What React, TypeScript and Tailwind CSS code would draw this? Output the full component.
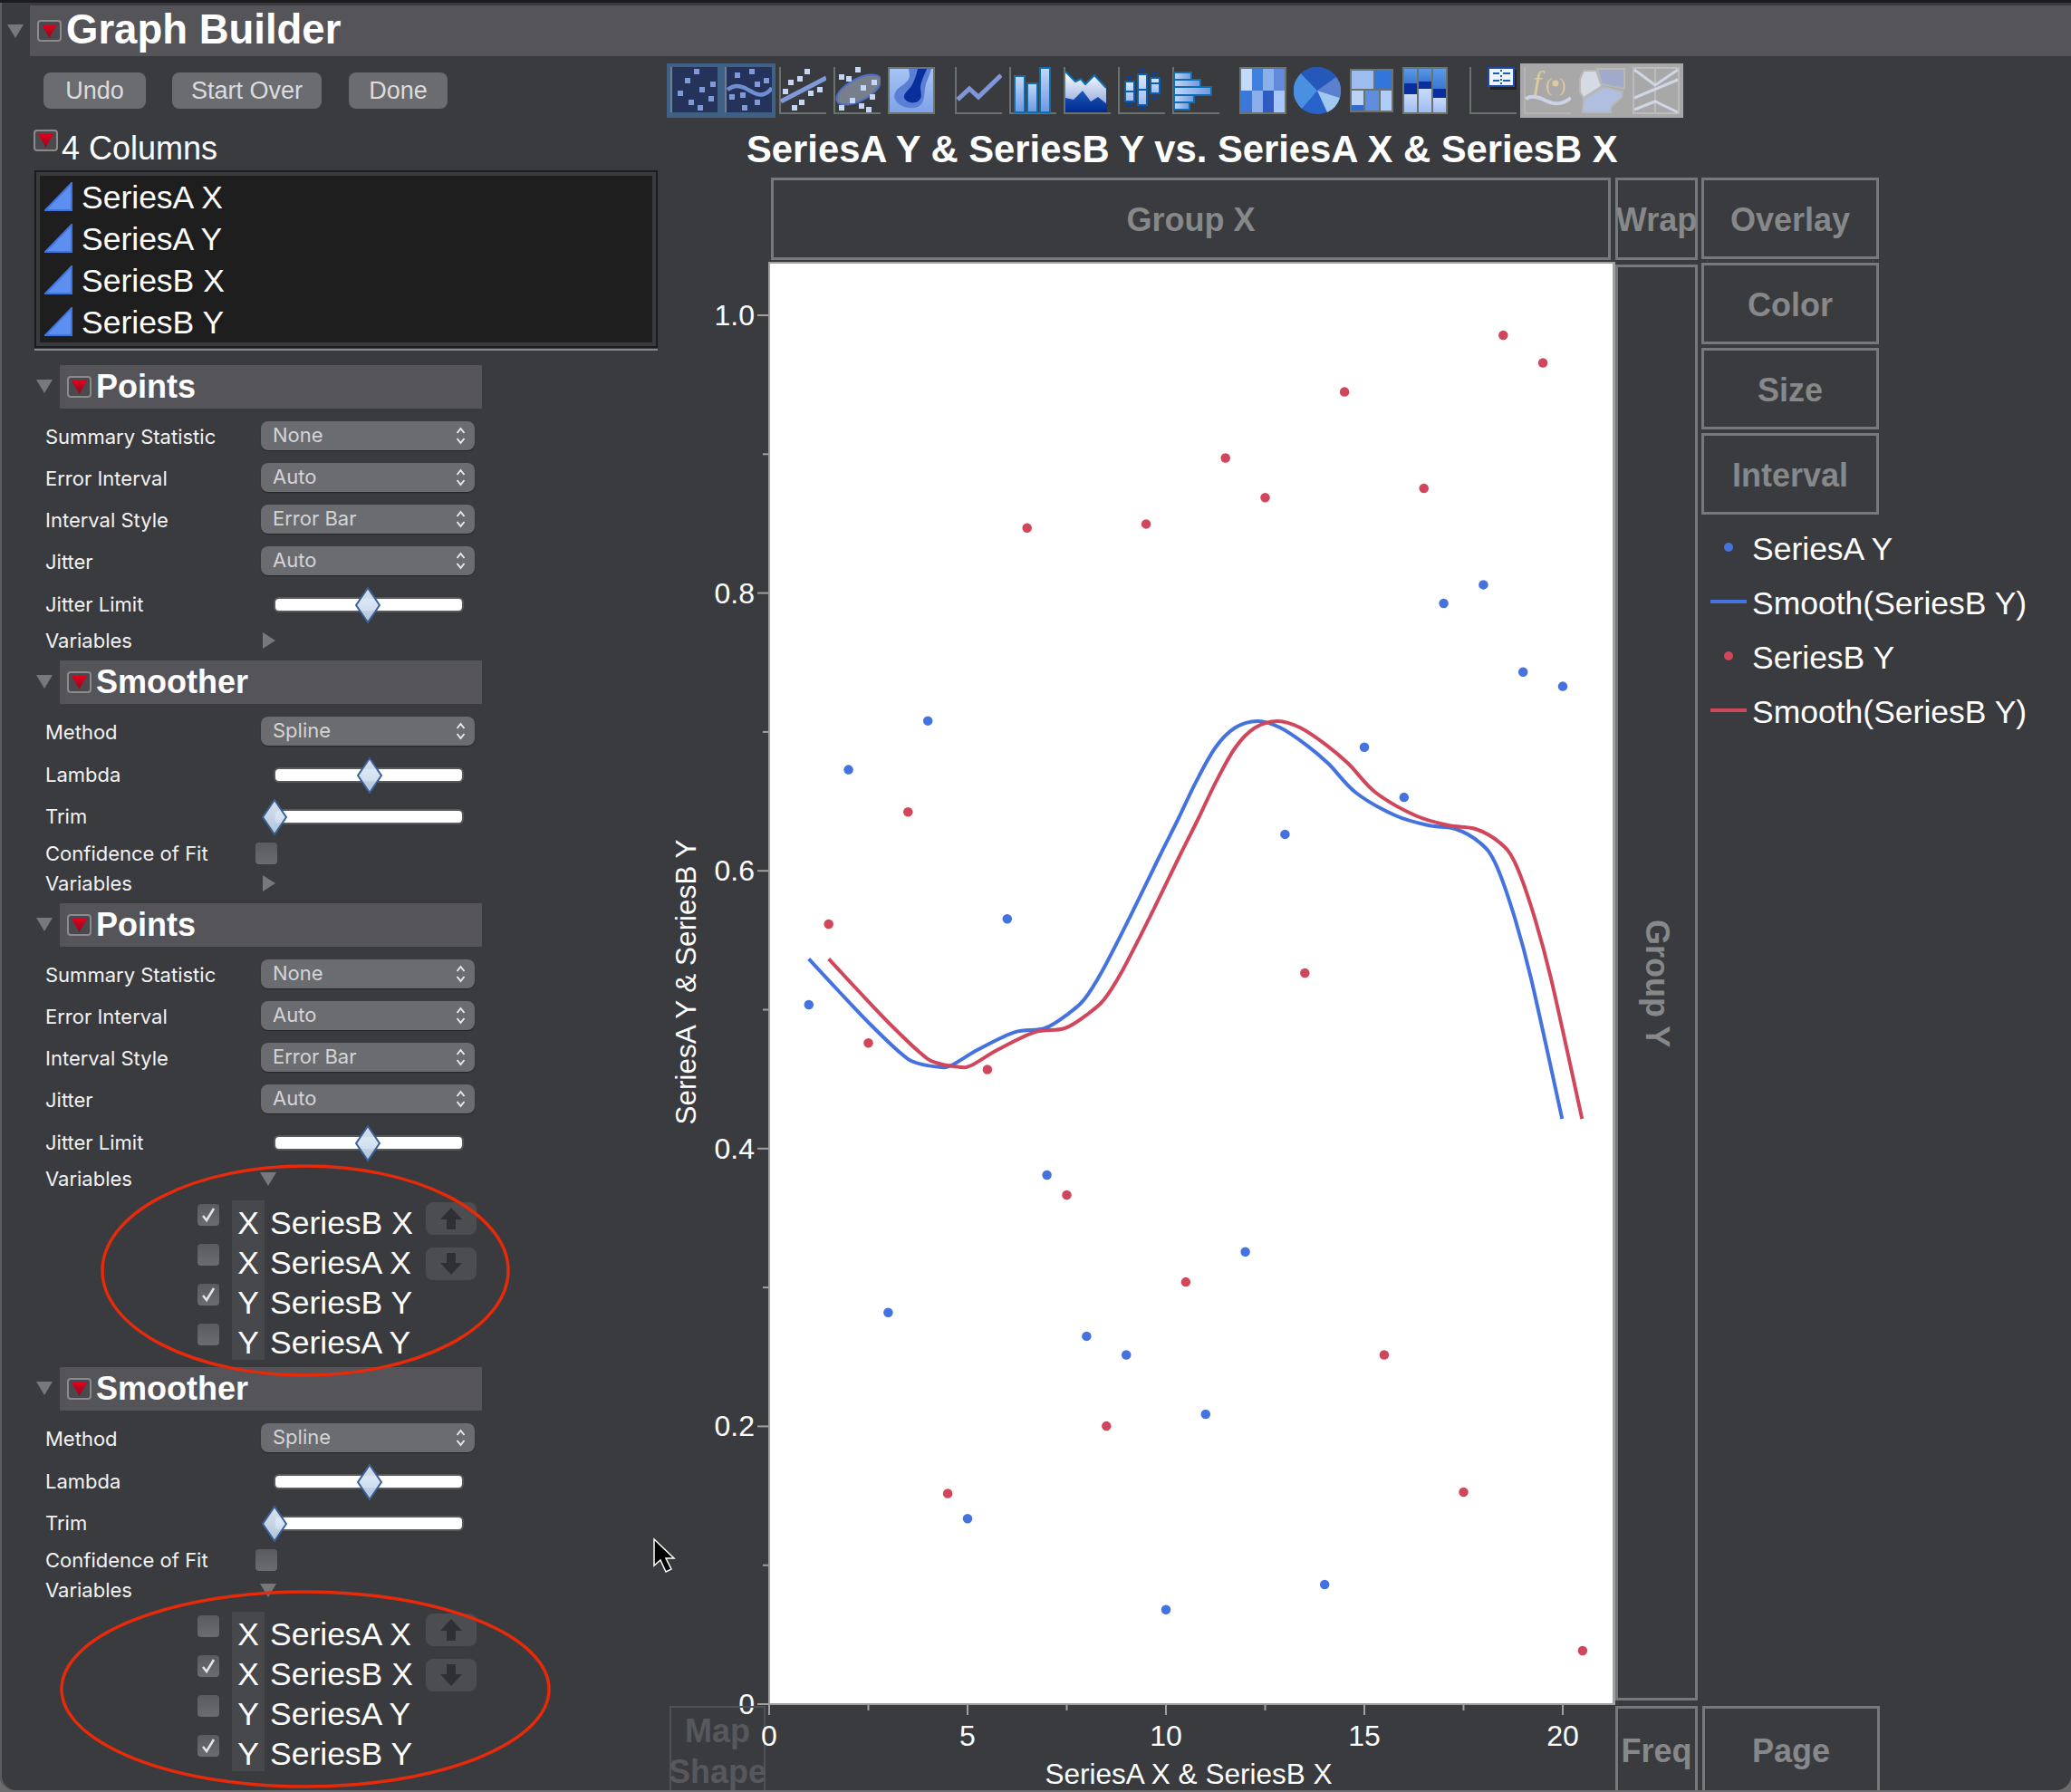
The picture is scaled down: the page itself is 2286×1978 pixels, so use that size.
import { ReactNode } from 'react';

// ---------- chart data ----------
const blueY = [0.5036, 0.6728, 0.282, 0.708, 0.1336, 0.5654, 0.3809, 0.2649, 0.2515, 0.068, 0.2087, 0.3257, 0.6263, 0.0861, 0.689, 0.6529, 0.7926, 0.806, 0.7432, 0.7328];
const redY = [0.5616, 0.476, 0.6424, 0.1517, 0.457, 0.8469, 0.3666, 0.2002, 0.8497, 0.3039, 0.8973, 0.8687, 0.5264, 0.9449, 0.2515, 0.8754, 0.1526, 0.9857, 0.9658, 0.0385];

// smoother, traced in page pixels
const curve: [number, number][] = [
  [892.7, 1058.3], [926.7, 1095], [960, 1130], [993.3, 1161.7], [1010, 1172.7], [1036.7, 1177.7], [1050, 1176],
  [1080, 1158.3], [1120, 1139.3], [1153.3, 1135], [1180, 1118.3], [1196.7, 1103.3], [1216.7, 1071.7], [1246.7, 1013.3],
  [1280, 945], [1300, 905], [1320, 863.3], [1341.7, 825], [1363.3, 803.3], [1388.3, 796], [1413.3, 803.3], [1443.3, 823.3],
  [1466.7, 843.3], [1496.7, 875], [1540, 900], [1576.7, 911], [1606.7, 915], [1633.3, 930], [1650, 951.7], [1670, 1006.7],
  [1690, 1080], [1724.3, 1235],
];

const BLUE = '#4472df';
const RED = '#d0465a';

function smoothPath(points: [number, number][]) {
  let d = `M${points[0][0]} ${points[0][1]}`;
  for (let i = 0; i < points.length - 1; i++) {
    const p0 = points[i - 1] || points[i];
    const p1 = points[i];
    const p2 = points[i + 1];
    const p3 = points[i + 2] || p2;
    const c1x = p1[0] + (p2[0] - p0[0]) / 6;
    const c1y = p1[1] + (p2[1] - p0[1]) / 6;
    const c2x = p2[0] - (p3[0] - p1[0]) / 6;
    const c2y = p2[1] - (p3[1] - p1[1]) / 6;
    d += ` C${c1x} ${c1y} ${c2x} ${c2y} ${p2[0]} ${p2[1]}`;
  }
  return d;
}

const px = (v: number) => -1 + 43.8 * v;
const py = (v: number) => 1590 - 1533 * v;

function PlotArea() {
  const local = curve.map(([x, y]) => [x - 850, y - 291] as [number, number]);
  const path = smoothPath(local);
  return (
    <svg width="931" height="1589" className="block">
      {blueY.map((v, i) => <circle key={i} cx={px(i + 1)} cy={py(v)} r="5.25" fill={BLUE} />)}
      {redY.map((v, i) => <circle key={i} cx={px(i + 1.5)} cy={py(v)} r="5.25" fill={RED} />)}
      <path d={path} fill="none" stroke={BLUE} strokeWidth="4" />
      <path d={path} transform="translate(22 0)" fill="none" stroke={RED} strokeWidth="4" />
    </svg>
  );
}

function YAxis() {
  const ticks = [0, 0.1, 0.2, 0.3, 0.4, 0.5, 0.6, 0.7, 0.8, 0.9, 1];
  const y = (v: number) => 1592 - 1533 * v;
  return (
    <svg width="112" height="1593" className="block overflow-visible" fontFamily="Liberation Sans, sans-serif">
      {ticks.map((v, i) => (
        <line key={v} x1={i % 2 === 0 ? 100 : 106} x2="112" y1={y(v)} y2={y(v)} stroke="#a0a0a0" strokeWidth="2" />
      ))}
      {[0, 0.2, 0.4, 0.6, 0.8, 1].map((v) => (
        <text key={v} x="97" y={y(v) + 11} textAnchor="end" fontSize="32" fill="#fff">
          {v === 0 ? '0' : v.toFixed(1)}
        </text>
      ))}
      <text transform="translate(32 795) rotate(-90)" textAnchor="middle" fontSize="31.5" fill="#fff">
        SeriesA Y &amp; SeriesB Y
      </text>
    </svg>
  );
}

function XAxis() {
  const ticks = [0, 2.5, 5, 7.5, 10, 12.5, 15, 17.5, 20];
  const x = (v: number) => 1 + 43.8 * v;
  return (
    <svg width="935" height="93" className="block overflow-visible" fontFamily="Liberation Sans, sans-serif">
      {ticks.map((v, i) => (
        <line key={v} x1={x(v)} x2={x(v)} y1="0" y2={i % 2 === 0 ? 11 : 6} stroke="#a0a0a0" strokeWidth="2" />
      ))}
      {[0, 5, 10, 15, 20].map((v) => (
        <text key={v} x={x(v)} y="45" textAnchor="middle" fontSize="32" fill="#fff">{v}</text>
      ))}
      <text x="464" y="87" textAnchor="middle" fontSize="31.5" fill="#fff">SeriesA X &amp; SeriesB X</text>
    </svg>
  );
}

// ---------- toolbar icons ----------
function Icon({ children }: { children: ReactNode }) {
  return (
    <svg width="52" height="52" viewBox="0 0 52 52" className="block shrink-0">
      {children}
    </svg>
  );
}

const Axes = ({ color = '#6b736f' }: { color?: string }) => (
  <path d="M1 0V51H52" fill="none" stroke={color} strokeWidth="2" />
);

function Squares({ pts, fill }: { pts: number[][]; fill: string }) {
  return (
    <>
      {pts.map(([x, y]) => <rect key={`${x}-${y}`} x={x - 3} y={y - 3} width="6" height="6" fill={fill} />)}
    </>
  );
}

function Grad({ id, from, to, horizontal }: { id: string; from: string; to: string; horizontal?: boolean }) {
  return (
    <defs>
      <linearGradient id={id} x1="0" y1="0" x2={horizontal ? '1' : '0'} y2={horizontal ? '0' : '1'}>
        <stop offset="0" stopColor={from} />
        <stop offset="1" stopColor={to} />
      </linearGradient>
    </defs>
  );
}

const ScatterIcon = () => (
  <Icon>
    <rect x="2" y="0" width="50" height="50" fill="#25335a" />
    <path d="M1 0V50" stroke="#6b7f95" strokeWidth="2" />
    <Squares fill="#7f9ad8" pts={[[29, 5], [19, 15], [47, 19], [35, 25], [11, 29], [45, 35], [23, 39], [33, 45]]} />
  </Icon>
);

const WaveIcon = () => (
  <Icon>
    <rect x="2" y="0" width="50" height="50" fill="#25335a" />
    <path d="M1 0V50" stroke="#6b7f95" strokeWidth="2" />
    <path d="M3 25C10 20 15 20 22 23C30 27 36 32 43 30C47 29 50 26 52 23" fill="none" stroke="#6f8fd0" strokeWidth="4.5" />
    <Squares fill="#7f9ad8" pts={[[14, 9], [30, 5], [46, 15], [36, 19], [20, 31], [8, 33], [36, 39], [22, 45]]} />
  </Icon>
);

const LineFitIcon = () => (
  <Icon>
    <Axes />
    <path d="M2 38L52 12" stroke="#7f9ad8" strokeWidth="5" />
    <Squares fill="#c5d6f6" pts={[[31, 5], [23, 13], [13, 17], [7, 27], [35, 29], [45, 25], [25, 39], [17, 45]]} />
  </Icon>
);

const EllipseIcon = () => (
  <Icon>
    <Axes />
    <ellipse cx="28" cy="25" rx="27" ry="12" transform="rotate(-28 28 25)" fill="#777f8c" stroke="#4a6fc8" strokeWidth="2" />
    <Squares fill="#c5d6f6" pts={[[27, 3], [9, 11], [17, 13], [45, 17], [33, 23], [43, 33], [21, 37], [31, 43], [39, 47], [9, 45]]} />
  </Icon>
);

const ContourIcon = () => (
  <Icon>
    <Grad id="contour" from="#a8c4f4" to="#7ea2ea" />
    <rect x="1" y="1" width="50" height="50" fill="url(#contour)" stroke="#6b736f" strokeWidth="2" />
    <path d="M23 2H48C46 10 42 16 41 24C40 32 40 38 36 42C30 47 18 46 11 40C6 35 6 29 11 24C17 19 24 16 24 9Z" fill="#5c7fd6" />
    <path d="M33 2H43C40 10 36 16 36 24C37 30 38 35 33 38C28 41 20 39 18 34C17 30 22 26 26 21C29 16 31 10 33 2Z" fill="#0a2f9c" />
  </Icon>
);

const LineIcon = () => (
  <Icon>
    <Axes />
    <path d="M3 36L16 24L26 33L51 9" fill="none" stroke="#7f96d8" strokeWidth="5" />
  </Icon>
);

const BarIcon = () => (
  <Icon>
    <Grad id="bars" from="#c6d8f6" to="#6f97e0" />
    <Axes />
    {[[6, 10], [20, 18], [34, 1]].map(([x, y]) => (
      <rect key={x} x={x} y={y} width="11" height={50 - y} fill="url(#bars)" stroke="#0a6db5" strokeWidth="2" />
    ))}
  </Icon>
);

const AreaIcon = () => (
  <Icon>
    <Grad id="areaBack" from="#ffffff" to="#7f9ad8" />
    <Grad id="areaFront" from="#1e59b8" to="#002a90" />
    <Axes />
    <path d="M2 5L13 16L19 13L24 19L34 9L47 23V50H2Z" fill="url(#areaBack)" />
    <path d="M2 5L13 16L19 13L24 19L34 9L47 23" fill="none" stroke="#0a6db5" strokeWidth="2" />
    <path d="M2 34L11 36L21 26L30 38L38 33L48 41V50H2Z" fill="url(#areaFront)" />
  </Icon>
);

const BoxIcon = () => (
  <Icon>
    <Grad id="boxes" from="#dbe7fa" to="#9dbaf0" />
    <Axes />
    {[[13, 10, 43, 16, 38, 27], [27, 2, 47, 8, 42, 25], [41, 6, 35, 12, 29, 18]].map(([x, t, b, y1, y2, m]) => (
      <g key={x}>
        <path d={`M${x} ${t}V${b}M${x - 3} ${t}H${x + 3}M${x - 3} ${b}H${x + 3}`} stroke="#0a3f9c" strokeWidth="2" fill="none" />
        <rect x={x - 5} y={y1} width="10" height={y2 - y1} fill="url(#boxes)" stroke="#0a5fb5" strokeWidth="2" />
        <path d={`M${x - 5} ${m}H${x + 5}`} stroke="#0a5fb5" strokeWidth="2" />
      </g>
    ))}
  </Icon>
);

const HBarIcon = () => (
  <Icon>
    <Grad id="hbars" from="#c6d8f6" to="#6f97e0" horizontal />
    <Axes />
    {[[6, 21], [14, 31], [22, 43], [31, 24], [39, 19]].map(([y, r]) => (
      <rect key={y} x="2" y={y} width={r - 2} height={y === 22 ? 9 : 8} fill="url(#hbars)" stroke="#0a6db5" strokeWidth="2" />
    ))}
  </Icon>
);

const HeatIcon = () => (
  <Icon>
    <rect x="0" y="0" width="52" height="52" fill="#6b736f" />
    {[
      ['#c5d9fb', '#3f7fe0', '#8cb0ec', '#6289dc'],
      ['#3c78dc', '#8aaeec', '#2f5cc0', '#a8c6fb'],
    ].map((row, r) =>
      row.map((c, i) => <rect key={`${r}-${i}`} x={2 + i * 12} y={2 + r * 24} width="12" height="24" fill={c} />),
    )}
  </Icon>
);

const PieIcon = () => (
  <Icon>
    <circle cx="26" cy="26" r="26" fill="#2a62cc" />
    <path d="M26 26L8 7A26 26 0 0 0 9 46Z" fill="#4a90e0" />
    <path d="M26 26L8 7A26 26 0 0 1 47 11Z" fill="#2558b8" />
    <path d="M26 26L47 11A26 26 0 0 1 51 34Z" fill="#5c80d0" />
    <path d="M26 26L51 34A26 26 0 0 1 37 50Z" fill="#a0c8f0" />
  </Icon>
);

const TreemapIcon = () => (
  <Icon>
    <rect x="2" y="2" width="48" height="48" fill="#6b736f" />
    <rect x="4" y="4" width="24" height="20" fill="#9dbcf0" />
    <rect x="30" y="4" width="18" height="20" fill="#3276dc" />
    <rect x="4" y="26" width="13" height="22" fill="#bcd3f8" />
    <rect x="4" y="42" width="13" height="6" fill="#2f6bd0" />
    <rect x="19" y="26" width="15" height="22" fill="#5f8fdc" />
    <rect x="36" y="26" width="12" height="22" fill="#b0ccf8" />
  </Icon>
);

const MosaicIcon = () => (
  <Icon>
    <Grad id="mosaicTop" from="#5b9ae8" to="#3b78d0" />
    <Grad id="mosaicLow" from="#c8daf9" to="#9fbdf2" />
    <rect x="0" y="0" width="50" height="52" fill="#6b736f" />
    {[[2, 18, 30], [18, 16, 24], [34, 24, 34]].map(([x, a, b]) => (
      <g key={x}>
        <rect x={x} y="2" width="14" height={a - 2} fill="url(#mosaicTop)" />
        <rect x={x} y={a} width="14" height={b - a} fill="#0a2f9c" />
        <rect x={x} y={b} width="14" height={50 - b} fill="url(#mosaicLow)" />
      </g>
    ))}
  </Icon>
);

const CaptionIcon = () => (
  <Icon>
    <path d="M1 0V51H52" fill="none" stroke="#6b736f" strokeWidth="2" />
    <rect x="23" y="3" width="29" height="22" fill="#202226" />
    <rect x="20" y="0" width="30" height="22" fill="#1f4aa8" />
    <rect x="22" y="2" width="26" height="18" fill="#eef3fb" />
    <path d="M26 7H33M37 7H45M26 15H33M37 15H45" stroke="#1a5fb0" strokeWidth="2" />
    <path d="M35 3V5M35 9V11M35 13V15M35 17V19" stroke="#1a5fb0" strokeWidth="2" />
  </Icon>
);

const FormulaIcon = () => (
  <Icon>
    <path d="M1 0V51H52" fill="none" stroke="#b5b5b5" strokeWidth="2" />
    <text x="10" y="28" fontFamily="Liberation Serif, serif" fontStyle="italic" fontSize="34" fill="#dccb9f">f</text>
    <text x="24" y="27" fontFamily="Liberation Serif, serif" fontSize="22" fill="#dccb9f">(</text>
    <circle cx="35" cy="18" r="3.5" fill="#dccb9f" />
    <text x="39" y="27" fontFamily="Liberation Serif, serif" fontSize="22" fill="#dccb9f">)</text>
    <path d="M2 35C10 31 16 33 24 37C34 42 44 41 52 34" fill="none" stroke="#cbd3e4" strokeWidth="4" />
  </Icon>
);

const MapIcon = () => (
  <Icon>
    <path d="M21 2H51V24L26 19Z" fill="#a0aacb" stroke="#b8b8b8" strokeWidth="2" />
    <path d="M2 13L6 4H20L26 21L6 34L2 28Z" fill="#d4dbe5" stroke="#b8b8b8" strokeWidth="2" />
    <path d="M28 22L49 27L48 33L36 44V50H5L6 36Z" fill="#b0bfe0" stroke="#b8b8b8" strokeWidth="2" />
  </Icon>
);

const ParallelIcon = () => (
  <Icon>
    <path d="M1 0V51H52M25 0V51M1 1H52M51 1V51" fill="none" stroke="#bcbcbc" strokeWidth="2" />
    <path d="M2 3L25 20L50 3M2 34L50 14M2 47L25 38L50 50" fill="none" stroke="#cfd6e6" strokeWidth="3" />
  </Icon>
);

function Toolbar() {
  return (
    <div className="flex h-[60px] mt-[8px] items-center">
      <div className="flex h-full w-[120px] items-center gap-[8px] pl-[4px] bg-[#3f6186]">
        <ScatterIcon />
        <WaveIcon />
      </div>
      <div className="flex items-center gap-[8px] ml-[4px]">
        <LineFitIcon />
        <EllipseIcon />
        <ContourIcon />
      </div>
      <div className="flex items-center gap-[8px] ml-[22px]">
        <LineIcon />
        <BarIcon />
        <AreaIcon />
        <BoxIcon />
        <HBarIcon />
      </div>
      <div className="flex items-center gap-[8px] ml-[22px]">
        <HeatIcon />
        <PieIcon />
        <TreemapIcon />
        <MosaicIcon />
      </div>
      <div className="ml-[22px]">
        <CaptionIcon />
      </div>
      <div className="flex h-full w-[180px] items-center gap-[8px] ml-[4px] pl-[4px] bg-[#a8a8a8]">
        <FormulaIcon />
        <MapIcon />
        <ParallelIcon />
      </div>
    </div>
  );
}

// ---------- small controls ----------
function MenuButton() {
  return (
    <div className="flex h-[24px] w-[27px] shrink-0 items-center justify-center rounded-[4px] border-2 border-[#8b8b8d] bg-[#4a4a4e]">
      <svg width="19" height="15" viewBox="0 0 19 15">
        <Grad id="menuRed" from="#e0001f" to="#8f0a1c" />
        <path d="M1 0H18L9.5 15Z" fill="url(#menuRed)" />
      </svg>
    </div>
  );
}

function DiscloseDown() {
  return (
    <svg width="18" height="15" viewBox="0 0 18 15" className="block shrink-0">
      <path d="M0 0H18L9 15Z" fill="#77787a" />
    </svg>
  );
}

function DiscloseRight() {
  return (
    <svg width="14" height="18" viewBox="0 0 14 18" className="block shrink-0">
      <path d="M0 0L14 9L0 18Z" fill="#77787a" />
    </svg>
  );
}

function Select({ value }: { value: string }) {
  return (
    <div className="flex h-[32px] w-[236px] items-center justify-between rounded-[8px] bg-[#6b6c70] pl-[13px] pr-[10px] shadow-[0_1px_1px_rgba(0,0,0,0.4)]">
      <span className="font-['Inter',sans-serif] text-[22px] leading-none text-[#d4d4d6] -mt-[2px]">{value}</span>
      <svg width="11" height="22" viewBox="0 0 11 22">
        <path d="M1.5 8L5.5 3L9.5 8M1.5 14L5.5 19L9.5 14" fill="none" stroke="#e6e6e6" strokeWidth="2" />
      </svg>
    </div>
  );
}

function Label({ children, className = 'w-[238px]' }: { children: ReactNode; className?: string }) {
  return (
    <span className={`font-['Inter',sans-serif] text-[22px] leading-none text-[#f2f2f2] shrink-0 ${className}`}>
      {children}
    </span>
  );
}

function SelectRow({ label, value }: { label: string; value: string }) {
  return (
    <div className="flex h-[46px] items-center pl-[50px]">
      <Label className="mt-[2px] w-[238px]">{label}</Label>
      <Select value={value} />
    </div>
  );
}

function Slider({ thumb }: { thumb: string }) {
  return (
    <div className="relative h-[17px] w-[210px] rounded-[6px] border-2 border-[#57585c] bg-white">
      <svg width="28" height="40" viewBox="0 0 28 40" className={`absolute -top-[13px] ${thumb}`}>
        <Grad id="thumbFill" from="#e6f0fc" to="#bcd0e8" />
        <path d="M14 1L27 20L14 39L1 20Z" fill="url(#thumbFill)" fillOpacity="0.92" stroke="#3a5f96" strokeWidth="2" />
      </svg>
    </div>
  );
}

function SliderRow({ label, thumb }: { label: string; thumb: string }) {
  return (
    <div className="flex h-[46px] items-center pl-[50px]">
      <Label className="w-[252px]">{label}</Label>
      <Slider thumb={thumb} />
    </div>
  );
}

function Checkbox({ checked, className = '' }: { checked?: boolean; className?: string }) {
  return (
    <div className={`flex h-[24px] w-[24px] shrink-0 items-center justify-center rounded-[4px] bg-gradient-to-b from-[#5a5b5f] to-[#6b6c70] ${className}`}>
      {checked && (
        <svg width="16" height="18" viewBox="0 0 16 18">
          <path d="M2 10L6 15L14 2" fill="none" stroke="#e4e4e4" strokeWidth="2.5" />
        </svg>
      )}
    </div>
  );
}

function VariablesRow({ open, className = '' }: { open?: boolean; className?: string }) {
  return (
    <div className={`flex h-[34px] items-center pl-[50px] ${className}`}>
      <Label className={`-mt-[1px] ${open ? 'w-[237px]' : 'w-[240px]'}`}>Variables</Label>
      {open ? <DiscloseDown /> : <DiscloseRight />}
    </div>
  );
}

function ConfidenceRow() {
  return (
    <div className="flex h-[33px] items-center pl-[50px]">
      <Label className="w-[232px]">Confidence of Fit</Label>
      <Checkbox />
    </div>
  );
}

function SectionHeader({ title, className = '' }: { title: string; className?: string }) {
  return (
    <div className={`flex items-center ${className}`}>
      <div className="ml-[40px] w-[26px] -mt-[2px]">
        <DiscloseDown />
      </div>
      <div className="flex h-[48px] w-[466px] items-center gap-[5px] bg-[#555459] pl-[8px]">
        <MenuButton />
        <span className="text-[36px] font-bold leading-none text-white">{title}</span>
      </div>
    </div>
  );
}

function ArrowButton({ down, className = '' }: { down?: boolean; className?: string }) {
  return (
    <div className={`flex h-[36px] w-[56px] items-center justify-center rounded-[8px] bg-[#4c4d51] ${className}`}>
      <svg width="24" height="24" viewBox="0 0 24 24">
        <path d={down ? 'M7 0H17V11H24L12 24L0 11H7Z' : 'M12 0L24 13H17V24H7V13H0Z'} fill="#2f3033" />
      </svg>
    </div>
  );
}

function VarList({ rows, className = '' }: { rows: { axis: string; name: string; checked?: boolean }[]; className?: string }) {
  return (
    <div className={className}>
      {rows.map((row, i) => (
        <div key={row.name} className="flex h-[44px] pl-[218px]">
          <Checkbox checked={row.checked} className="mt-[4px]" />
          <span className="ml-[14px] flex w-[36px] items-center justify-center bg-[#47484c] pt-[7px] text-[35.5px] leading-none text-white">
            {row.axis}
          </span>
          <span className="ml-[6px] flex w-[172px] shrink-0 items-center pt-[7px] text-[35.5px] leading-none text-white">{row.name}</span>
          {i === 0 && <ArrowButton className="mt-[2px]" />}
          {i === 1 && <ArrowButton down className="mt-[8px]" />}
        </div>
      ))}
    </div>
  );
}

function PointsRows() {
  return (
    <div className="mt-[7px]">
      <SelectRow label="Summary Statistic" value="None" />
      <SelectRow label="Error Interval" value="Auto" />
      <SelectRow label="Interval Style" value="Error Bar" />
      <SelectRow label="Jitter" value="Auto" />
      <div className="mt-[2px]">
        <SliderRow label="Jitter Limit" thumb="left-[88px]" />
      </div>
    </div>
  );
}

function SmootherRows() {
  return (
    <div className="mt-[7px]">
      <SelectRow label="Method" value="Spline" />
      <div className="mt-[2px]">
        <SliderRow label="Lambda" thumb="left-[90px]" />
      </div>
      <SliderRow label="Trim" thumb="-left-[15px]" />
      <div className="mt-[1px]">
        <ConfidenceRow />
      </div>
    </div>
  );
}

// ---------- panels ----------
function ColumnsPanel() {
  const names = ['SeriesA X', 'SeriesA Y', 'SeriesB X', 'SeriesB Y'];
  return (
    <div className="ml-[38px] w-[688px] border-b-2 border-[#85868a] pb-[1px]">
      <div className="border-2 border-[#1c1c1e] p-[4px]">
        <div className="h-[184px] bg-[#1e1e1f]">
          {names.map((name) => (
            <div key={name} className="flex h-[46px] items-center gap-[10px] pl-[5px]">
              <svg width="31" height="32" viewBox="0 0 31 32" className="shrink-0">
                <path d="M1 31L30 1V31Z" fill="#5d8ff0" stroke="#3f74dc" strokeWidth="2" />
              </svg>
              <span className="mt-[3px] text-[35.5px] leading-none text-white">{name}</span>
            </div>
          ))}
        </div>
      </div>
    </div>
  );
}

function LeftPane() {
  return (
    <div className="w-[736px] shrink-0">
      <div className="mt-[18px] flex h-[40px] pl-[48px] text-[27px] text-[#dcdcdc]">
        <div className="flex w-[113px] items-center justify-center rounded-[8px] bg-[#6b6c70]">Undo</div>
        <div className="ml-[29px] flex w-[165px] items-center justify-center rounded-[8px] bg-[#6b6c70]">Start Over</div>
        <div className="ml-[30px] flex w-[109px] items-center justify-center rounded-[8px] bg-[#6b6c70]">Done</div>
      </div>
      <div className="mt-[23px] flex h-[45px] pl-[37px]">
        <MenuButton />
        <span className="ml-[4px] mt-[2px] text-[36px] leading-[38px] text-white">4 Columns</span>
      </div>
      <ColumnsPanel />

      <SectionHeader title="Points" className="mt-[16px]" />
      <PointsRows />
      <VariablesRow />

      <SectionHeader title="Smoother" className="mt-[5px]" />
      <SmootherRows />
      <VariablesRow />

      <SectionHeader title="Points" className="mt-[5px]" />
      <PointsRows />
      <VariablesRow open />
      <VarList
        className="mt-[7px]"
        rows={[
          { axis: 'X', name: 'SeriesB X', checked: true },
          { axis: 'X', name: 'SeriesA X' },
          { axis: 'Y', name: 'SeriesB Y', checked: true },
          { axis: 'Y', name: 'SeriesA Y' },
        ]}
      />

      <SectionHeader title="Smoother" className="mt-[8px]" />
      <SmootherRows />
      <VariablesRow open />
      <VarList
        className="mt-[7px]"
        rows={[
          { axis: 'X', name: 'SeriesA X' },
          { axis: 'X', name: 'SeriesB X', checked: true },
          { axis: 'Y', name: 'SeriesA Y' },
          { axis: 'Y', name: 'SeriesB Y', checked: true },
        ]}
      />
    </div>
  );
}

function Zone({ children, className = '' }: { children: ReactNode; className?: string }) {
  return (
    <div className={`flex items-center justify-center border-[3px] border-[#77787a] pt-[3px] text-[36px] font-bold leading-none text-[#87888a] ${className}`}>
      {children}
    </div>
  );
}

function LegendRow({ color, line, label }: { color: string; line?: boolean; label: string }) {
  return (
    <div className="flex h-[60px] items-center pl-[10px]">
      <div className="flex w-[40px] shrink-0 items-center justify-center">
        {line ? (
          <div className={`h-[4px] w-[40px] ${color}`} />
        ) : (
          <div className={`h-[10px] w-[10px] rounded-full ${color}`} />
        )}
      </div>
      <span className="ml-[6px] mt-[5px] whitespace-nowrap text-[35.5px] leading-none text-white">{label}</span>
    </div>
  );
}

function RightPane() {
  return (
    <div className="flex-1">
      <Toolbar />
      <div className="flex h-[66px] items-center pl-[88px] pt-[4px]">
        <span className="whitespace-nowrap text-[41.75px] font-bold leading-none text-white">
          SeriesA Y &amp; SeriesB Y vs. SeriesA X &amp; SeriesB X
        </span>
      </div>

      <div className="grid grid-cols-[112px_935px_92px_1fr] grid-rows-[93px_1593px_94px]">
        {/* drop zones above the plot */}
        <div />
        <Zone className="ml-[3px] h-[91px] w-[927px]">Group X</Zone>
        <Zone className="h-[91px] w-[91px]">Wrap</Zone>
        <Zone className="ml-[3px] h-[90px] w-[196px]">Overlay</Zone>

        {/* plot row */}
        <YAxis />
        <div className="border-2 border-[#a0a0a0] border-r-[3px] bg-white">
          <PlotArea />
        </div>
        <Zone className="mt-[3px] h-[1585px] w-[91px]">
          <span className="[writing-mode:vertical-rl]">Group Y</span>
        </Zone>
        <div className="ml-[3px] mt-[1px] flex flex-col">
          <div className="flex flex-col gap-[4px]">
            <Zone className="h-[90px] w-[196px]">Color</Zone>
            <Zone className="h-[90px] w-[196px]">Size</Zone>
            <Zone className="h-[90px] w-[196px]">Interval</Zone>
          </div>
          <div className="mt-[6px]">
            <LegendRow color="bg-[#4472df]" label="SeriesA Y" />
            <LegendRow color="bg-[#4472df]" line label="Smooth(SeriesB Y)" />
            <LegendRow color="bg-[#d0465a]" label="SeriesB Y" />
            <LegendRow color="bg-[#d0465a]" line label="Smooth(SeriesB Y)" />
          </div>
        </div>

        {/* drop zones below the plot */}
        <div className="ml-[3px] mt-[1px] flex h-[96px] w-[106px] flex-col items-center border-2 border-[#505155] pt-[3px] text-[36px] font-bold leading-[45px] text-[#57585b]">
          <span>Map</span>
          <span>Shape</span>
        </div>
        <XAxis />
        <Zone className="mt-[1px] h-[96px] w-[91px]">Freq</Zone>
        <Zone className="ml-[4px] mt-[1px] h-[96px] w-[196px]">Page</Zone>
      </div>
    </div>
  );
}

export default function App() {
  return (
    <div className="h-[1978px] w-[2286px] overflow-hidden bg-[#6c6c6e] font-['Liberation_Sans',Arial,sans-serif]">
      <div className="relative h-[1976px] w-full overflow-hidden rounded-b-[16px] border-t-[3px] border-t-[#1c1c1e] bg-[#3a3b3f] shadow-[inset_2px_0_0_#5c5d60]">
        <div className="mt-[3px] flex h-[56px] items-center">
          <div className="w-[33px] pl-[8px]">
            <DiscloseDown />
          </div>
          <div className="flex h-full flex-1 items-center gap-[5px] bg-[#555459] pl-[8px]">
            <MenuButton />
            <span className="-mt-[2px] text-[45.5px] font-bold leading-none text-white">Graph Builder</span>
          </div>
        </div>

        <div className="flex">
          <LeftPane />
          <RightPane />
        </div>

        {/* hand-drawn annotations over the panel */}
        <svg width="2286" height="1978" className="pointer-events-none absolute left-0 -top-[3px]">
          <ellipse cx="337" cy="1402.5" rx="224" ry="115.5" fill="none" stroke="#e62a0a" strokeWidth="3.5" />
          <ellipse cx="337" cy="1864.5" rx="269" ry="107.5" fill="none" stroke="#e62a0a" strokeWidth="3.5" />
          <path d="M722 1699V1728L729 1722L735 1735L741 1732L735 1720H744Z" fill="#000" stroke="#fff" strokeWidth="1.5" />
        </svg>
      </div>
    </div>
  );
}
